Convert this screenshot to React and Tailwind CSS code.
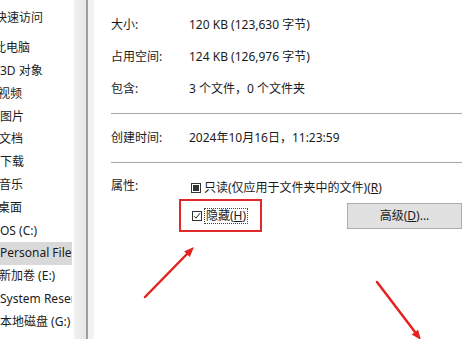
import React from 'react';

const font = { fontFamily: '"Noto Sans", "Noto Sans CJK SC", sans-serif' };

const navItems = [
  { label: '快速访问', shift: 'ml-[-5px]' },
  { label: '此电脑', shift: 'ml-[-6px]' },
  { label: '3D 对象', shift: 'ml-0' },
  { label: '视频', shift: 'ml-[-2px]' },
  { label: '图片', shift: 'ml-0' },
  { label: '文档', shift: 'ml-[-1px]' },
  { label: '下载', shift: 'ml-0' },
  { label: '音乐', shift: 'ml-[-1px]' },
  { label: '桌面', shift: 'ml-[-2px]' },
  { label: 'OS (C:)', shift: 'ml-0' },
  { label: 'Personal Files', shift: 'ml-0', active: true },
  { label: '新加卷 (E:)', shift: 'ml-[-1px]' },
  { label: 'System Reserved (F:)', shift: 'ml-0' },
  { label: '本地磁盘 (G:)', shift: 'ml-0' },
];

const info = [
  { label: '大小:', value: '120 KB (123,630 字节)' },
  { label: '占用空间:', value: '124 KB (126,976 字节)' },
  { label: '包含:', value: '3 个文件，0 个文件夹' },
];

const Sidebar = () => (
  <div className="w-[74px] shrink-0 bg-white">
    <div className="w-[72px] overflow-hidden pt-[7px]">
      {navItems.map((item, i) => (
        <div
          key={item.label}
          className={`h-[22.8px] flex items-center whitespace-nowrap ${i === 0 ? 'mb-[7px]' : ''} ${item.active ? 'bg-[#d9d9d9]' : ''}`}
        >
          <span className={`${item.shift} text-[12px] text-[#1b1b1b]`}>{item.label}</span>
        </div>
      ))}
    </div>
  </div>
);

const Arrows = () => (
  <svg className="absolute inset-0 pointer-events-none" width="469" height="339" viewBox="0 0 469 339">
    <line x1="145" y1="297" x2="188" y2="253" stroke="#e2231f" strokeWidth="2.5" strokeLinecap="round" />
    <polygon points="194,247 189.8,256.9 184.2,251.3" fill="#e2231f" />
    <line x1="377" y1="282" x2="415" y2="332" stroke="#e2231f" strokeWidth="2.5" strokeLinecap="round" />
    <polygon points="421,340 418.1,329.7 411.7,334.5" fill="#e2231f" />
  </svg>
);

const App = () => {
  return (
    <div className="relative w-[469px] h-[339px] overflow-hidden bg-white flex" style={font}>
      <Sidebar />
      <div className="w-[12px] shrink-0 bg-gradient-to-r from-[#f1f1f1] to-[#e6e6e6]" />
      <div className="w-[2px] shrink-0 bg-[#9e9e9e]" />
      <div className="w-[6px] shrink-0 bg-[#f2f2f2]" />
      <div className="flex-1 pl-[17px] pr-[7px] pt-[9px] text-[12px] text-[#1b1b1b]">
        {info.map((row) => (
          <div key={row.label} className="h-[32px] grid grid-cols-[78px_1fr] items-center whitespace-nowrap">
            <span>{row.label}</span>
            <span>{row.value}</span>
          </div>
        ))}
        <div className="mt-[8px] h-px bg-[#a8a8a8]" />
        <div className="h-[48px] grid grid-cols-[78px_1fr] items-center whitespace-nowrap">
          <span>创建时间:</span>
          <span>2024年10月16日，11:23:59</span>
        </div>
        <div className="h-px bg-[#a8a8a8]" />
        <div className="mt-[14px] h-[22px] grid grid-cols-[80px_1fr] items-center whitespace-nowrap">
          <span className="self-start leading-[18px]">属性:</span>
          <label className="flex items-center gap-[3px]">
            <span className="w-[10px] h-[10px] border border-[#333] flex items-center justify-center">
              <span className="w-[6px] h-[6px] bg-[#333]" />
            </span>
            <span>
              只读(仅应用于文件夹中的文件)(<span className="underline">R</span>)
            </span>
          </label>
        </div>
        <div className="flex items-center whitespace-nowrap">
          <div className="ml-[68px] w-[83px] h-[33px] border-2 border-[#e0292a] flex items-center pl-[11px] gap-[2px]">
            <span className="w-[10px] h-[10px] border border-[#333] flex items-center justify-center">
              <svg width="8" height="8" viewBox="0 0 8 8">
                <path d="M1 4.2 L3 6.2 L7 1.2" fill="none" stroke="#222" strokeWidth="1" />
              </svg>
            </span>
            <span className="border border-dotted border-[#444] px-px leading-[14px]">
              隐藏(<span className="underline">H</span>)
            </span>
          </div>
          <button className="ml-[85px] w-[115px] h-[26px] bg-[#e1e1e1] border border-[#adadad] text-[12px] text-[#1b1b1b]">
            高级(<span className="underline">D</span>)...
          </button>
        </div>
      </div>
      <Arrows />
    </div>
  );
};

export default App;
